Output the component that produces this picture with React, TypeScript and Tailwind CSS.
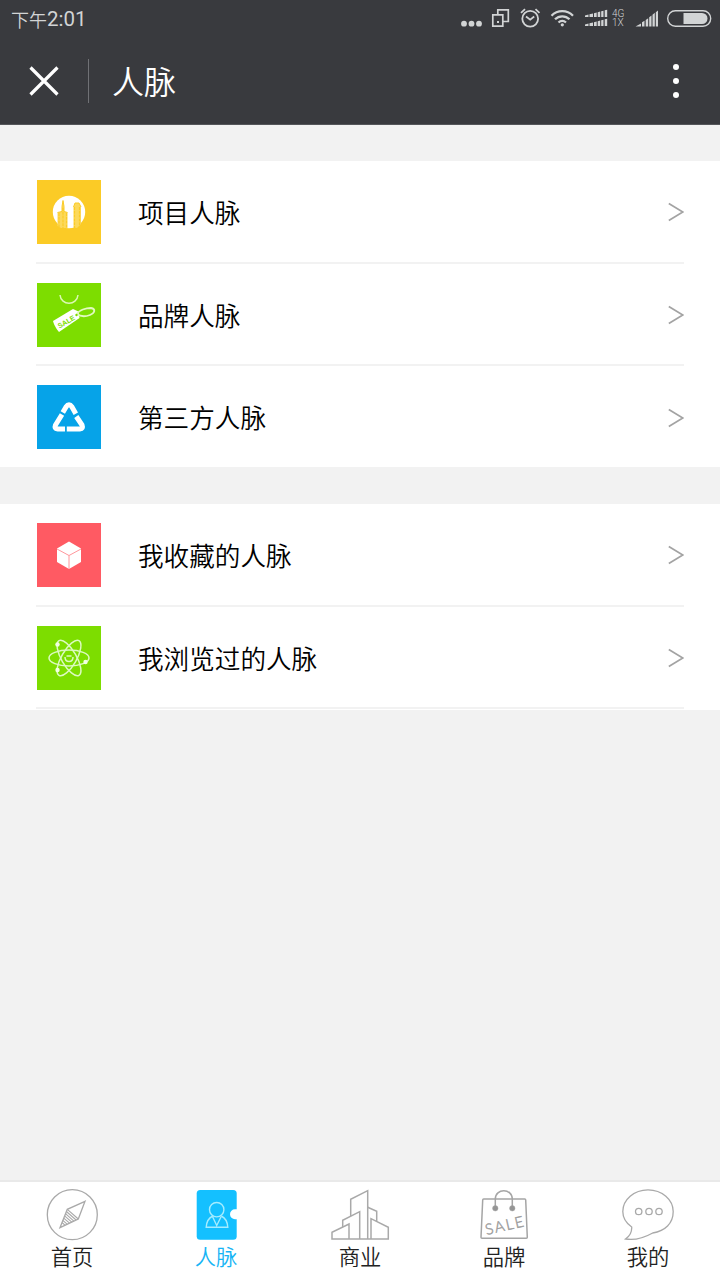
import React from 'react';

const ProjectIcon = () => (
  <svg viewBox="0 0 64 64" className="size-16 bg-[#fbcb26]">
    <circle cx="32" cy="32" r="16.2" fill="#fff" />
    <path d="M20.5 46V32.500l4.500-1v-5l1-6 1 6v5l3.500 1V48H24zM36.500 47.500V27l1.500-4h4l2 4v17l-4 4z" fill="#fcd95c" />
    <path
      d="M20.500 32.500l4.500-1v-5l1-6 1 6v5l3.500 1M36.500 27l1.500-4h4l2 4"
      fill="none"
      stroke="#fbcb26"
      strokeWidth="1"
    />
    <path
      d="M22 33v14M26 28v20M29.500 33v15M37.500 27v21M42.500 27v18"
      fill="none"
      stroke="#fbcb26"
      strokeWidth="1.200"
      strokeDasharray="3 0.800"
    />
  </svg>
);

const BrandIcon = () => (
  <svg viewBox="0 0 64 64" className="size-16 bg-[#7ddd00]">
    <path d="M23 12c1 11 17 11 18 0" fill="none" stroke="#dcf8b4" strokeWidth="1.500" />
    <path d="M16 38l20-12 5.500 2.500 1 6.500-20.500 14c-2-2-5-7-6-11z" fill="#fff" />
    <path
      d="M40 31c2-4 9-6 14-6 5 1 4 5-1 7-4 1.500-9 2-13-1"
      fill="none"
      stroke="#e2fac0"
      strokeWidth="1.800"
    />
    <text
      x="22.500"
      y="45.500"
      transform="rotate(-30 22.5 45.5)"
      fontSize="7"
      fontWeight="600"
      fontFamily="Liberation Sans, sans-serif"
      fill="#7ddd00"
    >
      SALE
    </text>
    <circle cx="39.500" cy="32" r="1.200" fill="#7ddd00" />
  </svg>
);

const ThirdPartyIcon = () => (
  <svg viewBox="0 0 64 64" className="size-16 bg-[#06a3e8]" fill="none" stroke="#fff" strokeWidth="5" strokeLinejoin="round">
    <path d="M25.800 27.500l3.200-5.500q3-4.500 6 0l3.800 6.800" />
    <path d="M25 29.500L18.500 40q-1.500 4 2 4H28" />
    <path d="M39.300 31.500l5.700 8.500q1.500 4-2 4H29.800" />
  </svg>
);

const CubeIcon = () => (
  <svg viewBox="0 0 64 64" className="size-16 bg-[#ff5a63]">
    <path d="M32 18.500l12 7v13.500l-12 7-12-7V25.500z" fill="#fff" />
    <path d="M20 26l12 6.500L44 26M32 32.500V46" fill="none" stroke="#ff8a90" strokeWidth="0.900" />
  </svg>
);

const AtomIcon = () => (
  <svg viewBox="0 0 64 64" className="size-16 bg-[#7ddd00]" fill="none" stroke="#dcfac0" strokeWidth="1.500">
    <ellipse cx="32" cy="32" rx="20" ry="8" />
    <ellipse cx="32" cy="32" rx="20" ry="7.500" transform="rotate(60 32 32)" />
    <ellipse cx="32" cy="32" rx="20" ry="7.500" transform="rotate(-60 32 32)" />
    <path d="M28 31c0 6 8 6 8 0M29.500 30h5" strokeWidth="1.500" />
    <g fill="#f2ffe2" stroke="none">
      <circle cx="20.500" cy="18.500" r="2.200" />
      <circle cx="20.500" cy="44" r="2.200" />
      <circle cx="48.500" cy="36" r="2.200" />
    </g>
  </svg>
);

const CompassIcon = () => (
  <svg viewBox="0 0 60 52" className="h-[52px] w-[60px]" fill="none" stroke="#a9a9a9" strokeWidth="1.300">
    <circle cx="30.300" cy="25.700" r="25" />
    <path d="M43 12.300L25.300 20.300 18 38.700 36.300 30z" />
    <path
      d="M25.300 20.300l11 9.700M24.400 22.500l9.700 8.500M23.500 24.700l8.400 7.400M22.600 26.900l7.200 6.200M21.700 29.100l5.900 5.100M20.800 31.300l4.600 4M20 33.500l3.200 2.800"
      strokeWidth="1.100"
    />
  </svg>
);

const ContactIcon = () => (
  <svg viewBox="0 0 60 52" className="h-[52px] w-[60px]">
    <rect x="10.700" y="1" width="40" height="49.700" rx="3.500" fill="#14c0ff" />
    <path d="M51 20.200h-2a5 5 0 0 0 0 10h2z" fill="#fff" />
    <g fill="none" stroke="#a5ecff" strokeWidth="1.400">
      <circle cx="30.700" cy="20.700" r="7.200" />
      <path d="M26.700 27c-4 2-6.200 5-6.500 11.300h21.600c-.3-6.300-2.500-9.300-6.500-11.300M26.500 27.500l4.200 9 4.500-9" />
    </g>
  </svg>
);

const BuildingsIcon = () => (
  <svg viewBox="0 0 60 52" className="h-[52px] w-[60px]" fill="none" stroke="#a9a9a9" strokeWidth="1.500">
    <path d="M20.700 27V10.300l17-8.600V50" />
    <path d="M12.700 38v-6.700l17-8.600V50" />
    <path d="M19 50V35L2 43.300V50h56.300V38.300L41 29.700V50" />
    <path d="M37.700 18.300l9 4v10" />
  </svg>
);

const BagIcon = () => (
  <svg viewBox="0 0 60 52" className="h-[52px] w-[60px]" fill="none" stroke="#a5a5a5" strokeWidth="1.500">
    <path d="M9.700 10h41q1 0 1 1l1.600 37.300q0 1-1 1H8q-1 0-1-1L8.700 11q0-1 1-1z" />
    <path d="M21.300 19.300V10c0-11 17-11 17 0v9.300" />
    <circle cx="21.300" cy="19.300" r="2.700" fill="#959595" strokeWidth="0.500" />
    <circle cx="38.300" cy="19.300" r="2.700" fill="#959595" strokeWidth="0.500" />
    <text
      x="12.500"
      y="46"
      transform="rotate(-13 12.5 46)"
      fontSize="15"
      textLength="39"
      fontFamily="Lato, sans-serif"
      fill="#a0a0a0"
      stroke="#a0a0a0"
      strokeWidth="0.500"
    >
      SALE
    </text>
  </svg>
);

const ChatIcon = () => (
  <svg viewBox="0 0 60 52" className="h-[52px] w-[60px]" fill="none" stroke="#a9a9a9" strokeWidth="1.300">
    <path d="M13.700 38C8 34 4.800 29 4.800 22.500 4.800 10.500 16 .8 30 .8s25.200 9.700 25.200 21.700c0 12-8.200 19.500-20.500 21.500C24 50 16 51.500 7.500 50c5-3.500 6.500-7 6.200-12z" />
    <circle cx="20.700" cy="22.500" r="3.200" />
    <circle cx="31" cy="22.500" r="3.200" />
    <circle cx="41" cy="22.500" r="3.200" />
  </svg>
);

const StatusIcons = () => (
  <div className="flex h-5 text-[#d2d4d5]">
    <svg viewBox="460 8 23 20" className="h-5 w-[23px]" fill="currentColor">
      <circle cx="464" cy="23.700" r="2.900" />
      <circle cx="471.500" cy="23.700" r="2.900" />
      <circle cx="479" cy="23.700" r="2.900" />
    </svg>
    <svg viewBox="491 8 19 20" className="ml-2 h-5 w-[19px]" fill="none" stroke="currentColor" strokeWidth="1.700">
      <path d="M492.800 14.800h10v11.400h-10zM497.800 14.500V9.900h10.500v11.600h-5" />
      <rect x="497" y="21" width="2" height="2" fill="currentColor" stroke="none" />
    </svg>
    <svg viewBox="520 8 21 20" className="ml-2.5 h-5 w-[21px]" fill="none" stroke="currentColor" strokeWidth="1.800">
      <circle cx="530.200" cy="18.700" r="7.900" />
      <path d="M526 16.500l4.200 3.200 4-3.200M521 12.800l4-3.600M539.500 12.800l-4-3.600" />
    </svg>
    <svg viewBox="550 8 25 20" className="ml-[9px] h-5 w-[25px]" fill="none" stroke="currentColor" strokeWidth="2.300">
      <path d="M551.500 15.700c6-6 15.500-6 21.500 0M555 19.300c4-4 10.500-4 14.500 0M558.500 22.500c2.200-2 5.300-2 7.500 0" />
      <circle cx="562.300" cy="24.800" r="1.600" fill="currentColor" stroke="none" />
    </svg>
    <svg viewBox="584 8 24 20" className="ml-[9px] h-5 w-6" fill="currentColor">
      <path d="M585 15.500l3.500-1v2.500H585zM589.500 14.300l3.500-.8V17h-3.500zM594 13.200l2.700-.7V17H594zM597.700 12.200l2.500-.6V17h-2.500zM601.200 11.300l2.300-.5V17h-2.300zM604.700 10.300l2.500-.5V17h-2.500z" />
      <path d="M585 24.500l3.500-1V26H585zM589.500 23.300l3.500-.8V26h-3.500zM594 22.200l2.700-.7V26H594zM597.700 21.200l2.500-.6V26h-2.500zM601.200 20.300l2.300-.5V26h-2.300zM604.700 19.300l2.500-.5V26h-2.500z" />
    </svg>
    <div className="ml-1 flex w-[14px] flex-col pt-[1px] font-['Roboto',sans-serif] text-[10px] leading-[9px]">
      <span>4G</span>
      <span>1X</span>
    </div>
    <svg viewBox="635 8 24 20" className="ml-[9px] h-5 w-6" fill="currentColor">
      <path d="M635.500 26.500l5.500-3v3zM642 22.300l2.500-1.600v5.800H642zM645.700 20l2.500-1.800v8.300h-2.500zM649.200 17.300l2.300-1.700v10.900h-2.300zM652.500 14.700l2.300-1.900v13.700h-2.300zM655.800 12.300l2.200-1.800v16h-2.200z" />
    </svg>
    <svg viewBox="667 8 45 20" className="ml-2 h-5 w-[45px]" fill="none" stroke="currentColor" strokeWidth="1.400">
      <rect x="667.700" y="10.700" width="43" height="15.500" rx="7.700" />
      <path d="M683.500 13H702a5.400 5.400 0 0 1 0 11h-18.500z" fill="currentColor" stroke="none" />
    </svg>
  </div>
);

const groups = [
  [
    { label: '项目人脉', Icon: ProjectIcon },
    { label: '品牌人脉', Icon: BrandIcon },
    { label: '第三方人脉', Icon: ThirdPartyIcon },
  ],
  [
    { label: '我收藏的人脉', Icon: CubeIcon },
    { label: '我浏览过的人脉', Icon: AtomIcon },
  ],
];

const tabs = [
  { label: '首页', Icon: CompassIcon },
  { label: '人脉', Icon: ContactIcon, active: true },
  { label: '商业', Icon: BuildingsIcon },
  { label: '品牌', Icon: BagIcon },
  { label: '我的', Icon: ChatIcon },
];

export default function App() {
  return (
    <div className="flex h-[1280px] w-[720px] flex-col overflow-hidden bg-[#f2f2f2] font-['Noto_Sans_CJK_SC',sans-serif] font-[350]">
      <header className="h-[125px] shrink-0 border-b border-[#55565a] bg-[#393a3e] text-white">
        <div className="flex h-[38px] items-start justify-between pt-2 pr-2 pl-[11px]">
          <span className="flex text-[18px] leading-[22px] text-[#d2d4d5]">
            下午
            <span className="font-['Roboto',sans-serif] text-[20.500px] leading-[23px] font-normal">2:01</span>
          </span>
          <StatusIcons />
        </div>
        <div className="flex h-[86px] items-center pr-[41px] pl-[29px]">
          <svg viewBox="0 0 30 30" className="size-[30px]" stroke="#fff" strokeWidth="3.200">
            <path d="M1.500 1.500l27 27M28.500 1.500l-27 27" />
          </svg>
          <div className="ml-[29px] h-11 w-px bg-[#707175]" />
          <h1 className="mb-[3px] ml-[23px] text-[32px] leading-10 font-[350]">人脉</h1>
          <svg viewBox="0 0 6 36" className="ml-auto h-9 w-[6px]" fill="#fff">
            <circle cx="3" cy="4" r="3" />
            <circle cx="3" cy="18" r="3" />
            <circle cx="3" cy="32" r="3" />
          </svg>
        </div>
      </header>

      <main className="flex flex-1 flex-col gap-[37px] pt-9">
        {groups.map((group, g) => (
          <section key={g} className={g === 0 ? 'h-[306px] overflow-hidden bg-white' : 'h-[206px] bg-white'}>
            {group.map(({ label, Icon }) => (
              <div key={label} className="mx-9 flex h-[102.700px] items-center border-b-2 border-[#f2f2f2] pt-px pl-px">
                <Icon />
                <span className="ml-[37px] text-[25.600px] leading-9 text-black">{label}</span>
                <svg viewBox="0 0 16 20" className="mt-px ml-auto h-5 w-4" fill="none" stroke="#a3a3a3" strokeWidth="1.700">
                  <path d="M.8 1.500l14 8.500-14 8.500" />
                </svg>
              </div>
            ))}
          </section>
        ))}
      </main>

      <nav className="flex h-[100px] shrink-0 border-t-2 border-[#e9e9e9] bg-white">
        {tabs.map(({ label, Icon, active }) => (
          <div key={label} className="flex flex-1 flex-col items-center pt-[7px]">
            <Icon />
            <span className={active ? 'text-[21.300px] leading-[29px] text-[#16b4f5]' : 'text-[21.300px] leading-[29px] text-[#222]'}>
              {label}
            </span>
          </div>
        ))}
      </nav>
    </div>
  );
}
